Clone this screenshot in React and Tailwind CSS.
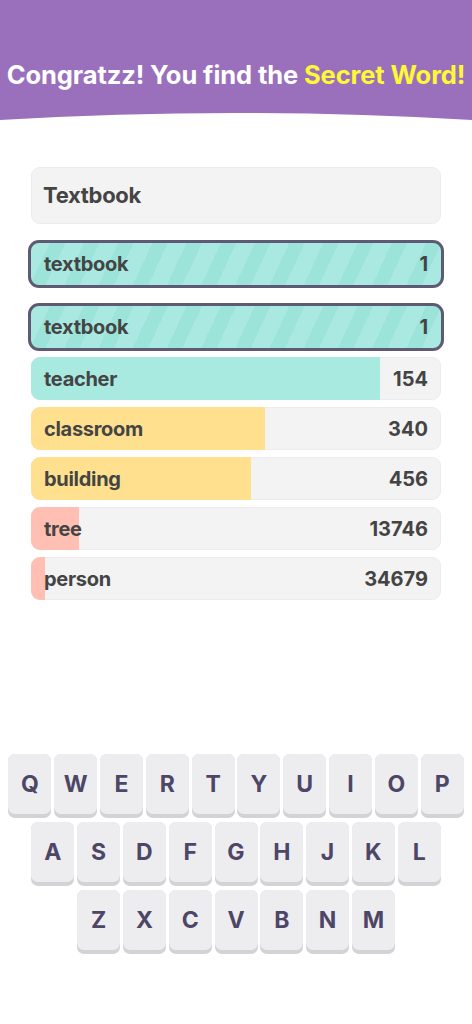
import React from 'react';

const guesses = [
  { word: 'teacher', rank: 154, fill: 349, color: 'bg-[#a8e9e0]' },
  { word: 'classroom', rank: 340, fill: 234, color: 'bg-[#ffe08f]' },
  { word: 'building', rank: 456, fill: 220, color: 'bg-[#ffe08f]' },
  { word: 'tree', rank: 13746, fill: 48, color: 'bg-[#ffc0b3]' },
  { word: 'person', rank: 34679, fill: 14, color: 'bg-[#ffc0b3]' },
];

const rows = [
  ['Q', 'W', 'E', 'R', 'T', 'Y', 'U', 'I', 'O', 'P'],
  ['A', 'S', 'D', 'F', 'G', 'H', 'J', 'K', 'L'],
  ['Z', 'X', 'C', 'V', 'B', 'N', 'M'],
];

const SecretRow = ({ word, rank }) => (
  <div className="mx-[-3px] h-[48px] rounded-[11px] border-[3px] border-[#5e5a74] bg-[repeating-linear-gradient(115deg,#a9e9e1_0px,#a9e9e1_17px,#9ce4da_17px,#9ce4da_31px)] flex items-center justify-between pl-[13px] pr-[13px]">
    <span className="text-[20px] font-bold text-[#444444] tracking-[-0.3px]">{word}</span>
    <span className="text-[20px] font-bold text-[#444444]">{rank}</span>
  </div>
);

const GuessRow = ({ word, rank, fill, color }) => (
  <div className="relative h-[43px] rounded-[9px] bg-[#f3f3f3] overflow-hidden shadow-[inset_0_0_0_1px_#ececec]">
    <div className={`absolute left-0 top-0 bottom-0 ${color}`} style={{ width: fill }} />
    <div className="relative h-full flex items-center justify-between pl-[13px] pr-[13px]">
      <span className="text-[20px] font-bold text-[#444444] tracking-[-0.3px]">{word}</span>
      <span className="text-[20px] font-bold text-[#444444]">{rank}</span>
    </div>
  </div>
);

const Key = ({ letter }) => (
  <div className="w-[43px] h-[64px] rounded-[7px] bg-[#d3d3d6] pb-[4px]">
    <div className="h-full rounded-[7px] bg-[#ededef] flex items-center justify-center text-[23px] font-bold text-[#4d4667]">
      {letter}
    </div>
  </div>
);

export default function App() {
  return (
    <div className="min-h-screen w-[472px] bg-white font-['Inter',sans-serif]">
      {/* Header */}
      <header className="bg-[#9a70bd] h-[113px] flex items-end justify-center pb-[19px]">
        <h1 className="text-[25.5px] font-bold text-white tracking-[-0.1px] whitespace-nowrap">
          Congratzz! You find the <span className="text-[#fff835]">Secret Word!</span>
        </h1>
      </header>
      <svg width="472" height="8" viewBox="0 0 472 8" className="block">
        <path d="M0 0 H472 V7 Q236 -7 0 7 Z" fill="#9a70bd" />
      </svg>

      {/* Guesses */}
      <div className="px-[31px] pt-[46px]">
        <div className="h-[57px] rounded-[9px] bg-[#f3f3f3] shadow-[inset_0_0_0_1px_#ececec] flex items-center px-[12px]">
          <span className="text-[22px] font-bold text-[#444444] tracking-[-0.3px]">Textbook</span>
        </div>

        <div className="mt-[16px]">
          <SecretRow word="textbook" rank={1} />
        </div>

        <div className="mt-[15px]">
          <SecretRow word="textbook" rank={1} />
        </div>

        <div className="mt-[6px] flex flex-col gap-[7px]">
          {guesses.map((g) => (
            <GuessRow key={g.word} {...g} />
          ))}
        </div>
      </div>

      {/* Keyboard */}
      <div className="mt-[154px] flex flex-col gap-[4px]">
        {rows.map((row, i) => (
          <div key={i} className="flex justify-center gap-[2.8px]">
            {row.map((k) => (
              <Key key={k} letter={k} />
            ))}
          </div>
        ))}
      </div>
    </div>
  );
}
